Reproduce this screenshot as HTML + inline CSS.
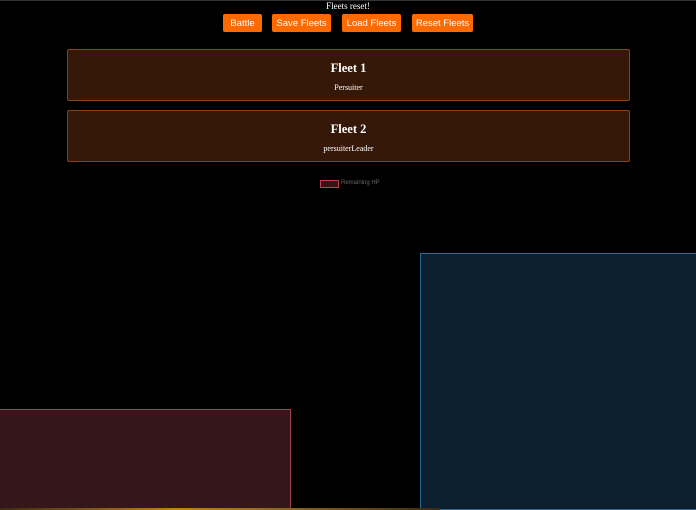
<!DOCTYPE html>
<html><head><style>
body{margin:0;width:696px;height:510px;background:#000;overflow:hidden;position:relative;font-family:"Liberation Sans",sans-serif}
.top{position:absolute;top:0;left:0;width:696px;height:1px;background:#333}
.msg{position:absolute;top:1px;left:0;width:696px;text-align:center;color:#fff;font:9px "Liberation Serif",serif}
.btn{position:absolute;top:14px;height:18px;background:#ff6a00;border-radius:2px;color:#fff;font-size:9.5px;line-height:20px;text-align:center;overflow:hidden}
.card{position:absolute;left:67px;width:561px;height:50px;background:#361808;border:1px solid #8a4212;border-radius:2px;text-align:center;color:#fff;font-family:"Liberation Serif",serif}
.card h3{margin:11px 0 0;font-size:12.5px}
.card p{margin:7px 0 0;font-size:8px}
</style></head><body>
<div class="top"></div>
<div class="msg">Fleets reset!</div>
<div class="btn" style="left:223px;width:39px">Battle</div>
<div class="btn" style="left:272px;width:59px">Save Fleets</div>
<div class="btn" style="left:342px;width:59px">Load Fleets</div>
<div class="btn" style="left:412px;width:61px">Reset Fleets</div>
<div class="card" style="top:49px"><h3>Fleet 1</h3><p>Persuiter</p></div>
<div class="card" style="top:110px"><h3>Fleet 2</h3><p>persuiterLeader</p></div>
<div style="position:absolute;left:320px;top:180px;width:17px;height:6px;border:1px solid #c04050;background:#361418"></div>
<div style="position:absolute;left:341px;top:180px;color:#666;font-size:6px">Remaining HP</div>
<div style="position:absolute;left:0;top:409px;width:291px;height:101px;background:#35161b;border:1px solid #a04050;border-left:none;box-sizing:border-box"></div>
<div style="position:absolute;left:420px;top:253px;width:276px;height:257px;background:#0b1f2e;border:1px solid #2a6a90;border-right:none;box-sizing:border-box"></div>
<div style="position:absolute;left:0;top:508px;width:440px;height:2px;background:linear-gradient(90deg,#3a2a10,#c08020 40%,#806020 70%,#3a2a10)"></div>
</body></html>
